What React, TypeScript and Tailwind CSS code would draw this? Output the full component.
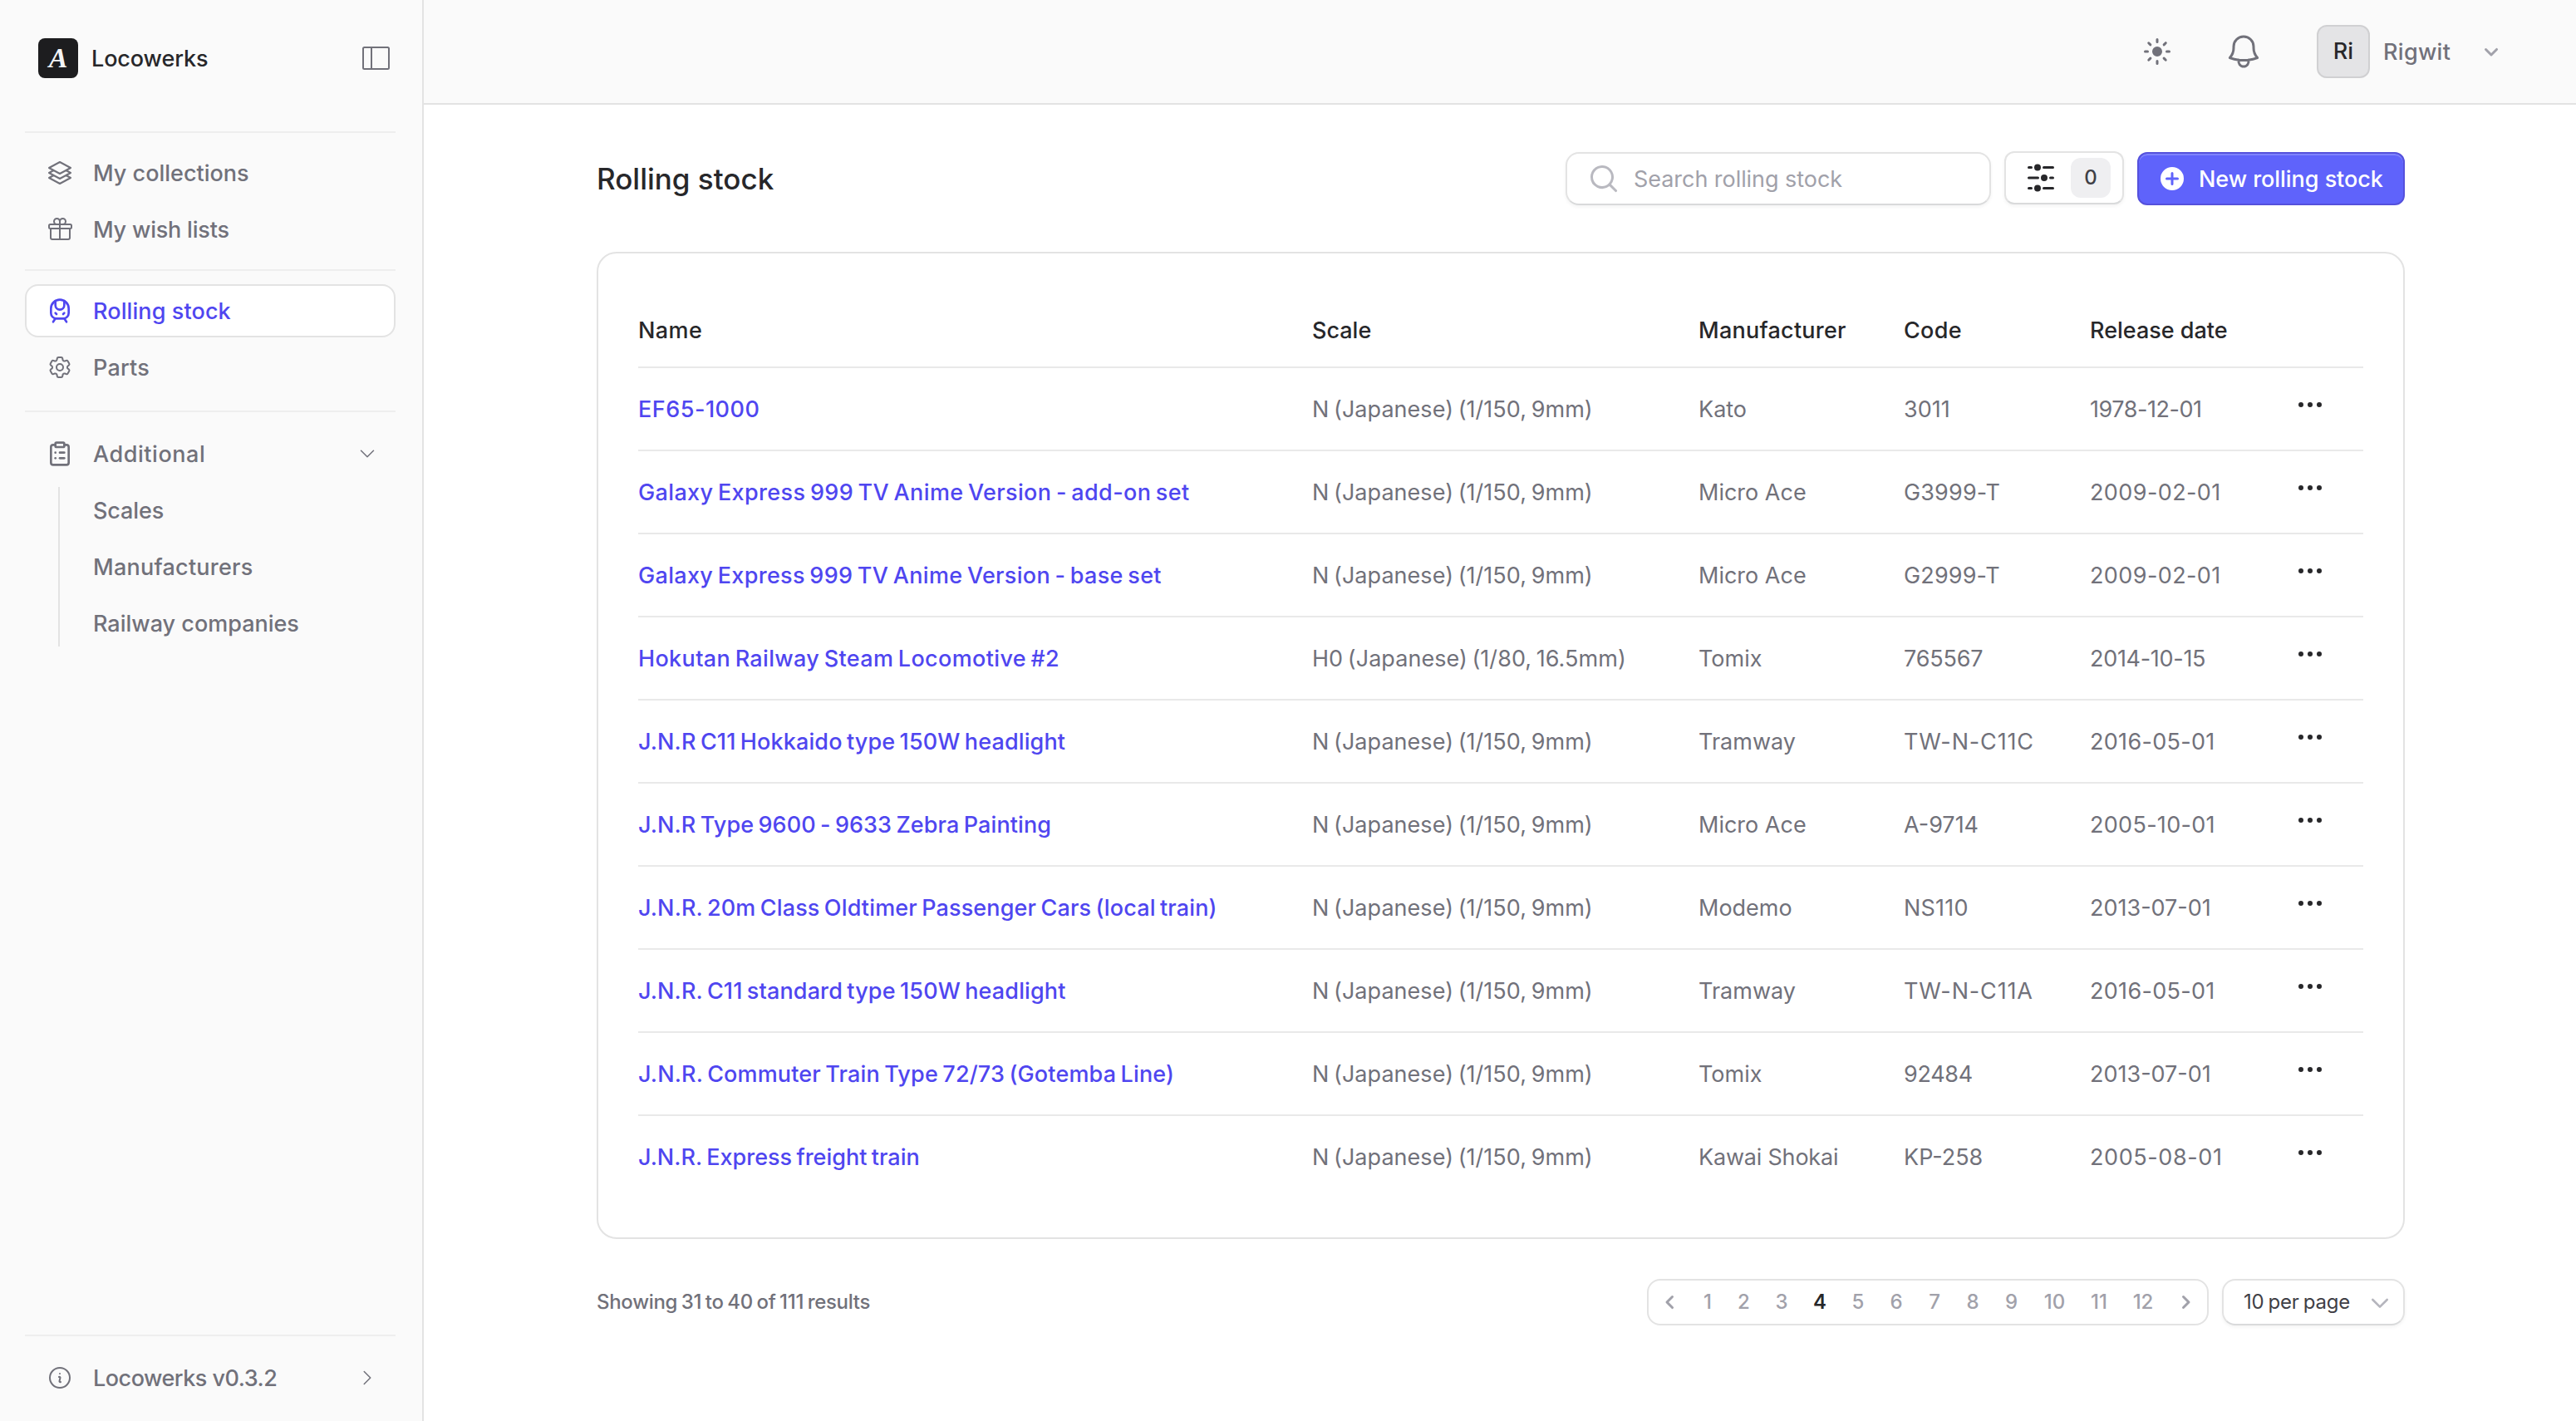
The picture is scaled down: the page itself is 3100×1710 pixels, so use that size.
import type { ReactNode } from 'react';
import clsx from 'clsx';
import { ClipboardList, TrainFront } from 'lucide-react';
import {
  HiMiniAdjustmentsHorizontal,
  HiMiniEllipsisHorizontal,
  HiMiniMagnifyingGlass,
  HiMiniSun,
  HiOutlineBell,
  HiOutlineChevronDown,
  HiOutlineChevronRight,
  HiOutlineCog6Tooth,
  HiOutlineGift,
  HiOutlineInformationCircle,
  HiOutlineSquare3Stack3D,
} from 'react-icons/hi2';

const rows = [
  { name: 'EF65-1000', nameClass: 'tracking-[0.5px]', scale: 'N (Japanese) (1/150, 9mm)', maker: 'Kato', code: '3011', date: '1978-12-01', dateClass: 'tracking-[-0.45px]' },
  { name: 'Galaxy Express 999 TV Anime Version - add-on set', nameClass: 'tracking-[0.36px]', scale: 'N (Japanese) (1/150, 9mm)', maker: 'Micro Ace', code: 'G3999-T', codeClass: 'tracking-[0.15px]', date: '2009-02-01', dateClass: 'tracking-[0.4px]' },
  { name: 'Galaxy Express 999 TV Anime Version - base set', nameClass: 'tracking-[0.32px]', scale: 'N (Japanese) (1/150, 9mm)', maker: 'Micro Ace', code: 'G2999-T', codeClass: 'tracking-[0.15px]', date: '2009-02-01', dateClass: 'tracking-[0.4px]' },
  { name: 'Hokutan Railway Steam Locomotive #2', nameClass: 'tracking-[0.35px]', scale: 'H0 (Japanese) (1/80, 16.5mm)', maker: 'Tomix', code: '765567', codeClass: 'tracking-[-0.2px]', date: '2014-10-15', dateClass: 'tracking-[-0.3px]' },
  { name: 'J.N.R C11 Hokkaido type 150W headlight', nameClass: 'tracking-[0.13px]', scale: 'N (Japanese) (1/150, 9mm)', maker: 'Tramway', code: 'TW-N-C11C', codeClass: 'tracking-[0.85px]', date: '2016-05-01', dateClass: 'tracking-[0.3px]' },
  { name: 'J.N.R Type 9600 - 9633 Zebra Painting', nameClass: 'tracking-[0.1px]', scale: 'N (Japanese) (1/150, 9mm)', maker: 'Micro Ace', code: 'A-9714', date: '2005-10-01', dateClass: 'tracking-[0.3px]' },
  { name: 'J.N.R. 20m Class Oldtimer Passenger Cars (local train)', nameClass: 'tracking-[0.14px]', scale: 'N (Japanese) (1/150, 9mm)', maker: 'Modemo', code: 'NS110', codeClass: 'tracking-[0.2px]', date: '2013-07-01' },
  { name: 'J.N.R. C11 standard type 150W headlight', nameClass: 'tracking-[0.13px]', scale: 'N (Japanese) (1/150, 9mm)', maker: 'Tramway', code: 'TW-N-C11A', codeClass: 'tracking-[0.85px]', date: '2016-05-01', dateClass: 'tracking-[0.3px]' },
  { name: 'J.N.R. Commuter Train Type 72/73 (Gotemba Line)', nameClass: 'tracking-[0.16px]', scale: 'N (Japanese) (1/150, 9mm)', maker: 'Tomix', code: '92484', codeClass: 'tracking-[-0.3px]', date: '2013-07-01' },
  { name: 'J.N.R. Express freight train', nameClass: 'tracking-[0.02px]', scale: 'N (Japanese) (1/150, 9mm)', maker: 'Kawai Shokai', makerClass: 'tracking-[-0.2px]', code: 'KP-258', date: '2005-08-01', dateClass: 'tracking-[0.6px]' },
];

const pages = [
  { n: 1, width: 'w-[42px]' },
  { n: 2, width: 'w-[45px]' },
  { n: 3, width: 'w-[46px]' },
  { n: 4, width: 'w-[46px]' },
  { n: 5, width: 'w-[46px]' },
  { n: 6, width: 'w-[46px]' },
  { n: 7, width: 'w-[46px]' },
  { n: 8, width: 'w-[46px]' },
  { n: 9, width: 'w-[47px]' },
  { n: 10, width: 'w-[57px]' },
  { n: 11, width: 'w-[50px]' },
  { n: 12, width: 'w-[56px]' },
];

function NavItem({
  icon,
  label,
  labelClass,
  active,
  trailing,
}: {
  icon?: ReactNode;
  label: string;
  labelClass?: string;
  active?: boolean;
  trailing?: ReactNode;
}) {
  return (
    <a
      className={clsx(
        'flex h-16 shrink-0 items-center rounded-2xl border-2 px-6',
        active ? 'border-[#e3e3e3] bg-white text-[#4f46f0]' : 'border-transparent text-[#71717a]',
      )}
    >
      <span className="mr-6 size-8">{icon}</span>
      <span className={clsx('flex-1 pt-0.5 text-[27px] leading-9 font-medium', labelClass)}>{label}</span>
      {trailing}
    </a>
  );
}

const subItems = [
  { label: 'Scales', tracking: 'tracking-[-0.1px]' },
  { label: 'Manufacturers', tracking: 'tracking-[0.25px]' },
  { label: 'Railway companies', tracking: 'tracking-normal' },
];

function Sidebar() {
  return (
    <aside className="flex w-[510px] shrink-0 flex-col border-r-2 border-[#e3e3e3] bg-[#fafafa] pr-8 pb-5 pl-[30px]">
      <div className="flex h-[158px] items-start pt-[46px] pr-1 pl-4">
        <div className="flex size-12 items-center justify-center rounded-lg bg-[#1d1d1f]">
          <span className="font-['Liberation_Serif'] text-[34px] leading-none font-bold text-[#f4f4f5] italic">A</span>
        </div>
        <span className="ml-4 flex-1 pt-px text-[27px] leading-[48px] font-medium tracking-[-0.1px] text-[#27272a]">Locowerks</span>
        <svg viewBox="0 0 40 40" className="mt-1 size-10 text-[#71717a]" fill="none" stroke="currentColor" strokeWidth="2">
          <rect x="5" y="7" width="31" height="26" rx="1.5" />
          <path d="M15 7v26" />
        </svg>
      </div>
      <div className="h-0.5 bg-[#eeeeee]" />
      <nav className="flex flex-col gap-1 py-4">
        <NavItem icon={<HiOutlineSquare3Stack3D className="size-8" />} label="My collections" />
        <NavItem icon={<HiOutlineGift className="size-8" />} label="My wish lists" labelClass="tracking-[-0.2px]" />
      </nav>
      <div className="h-0.5 bg-[#eeeeee]" />
      <nav className="flex flex-col gap-1 pt-4 pb-5">
        <NavItem icon={<TrainFront className="size-8" />} label="Rolling stock" labelClass="tracking-[0.1px]" active />
        <NavItem icon={<HiOutlineCog6Tooth className="size-8" />} label="Parts" labelClass="tracking-[0.2px]" />
      </nav>
      <div className="h-0.5 bg-[#eeeeee]" />
      <nav className="flex flex-col gap-2 pt-[18px]">
        <NavItem
          icon={<ClipboardList className="size-8" />}
          label="Additional"
          labelClass="tracking-[0.55px]"
          trailing={<HiOutlineChevronDown className="mr-[-4px] size-6" />}
        />
        <div className="ml-10 flex h-48 flex-col justify-center gap-1 border-l-2 border-[#e3e3e3]">
          {subItems.map((item) => (
            <a
              key={item.label}
              className={clsx('flex h-16 shrink-0 items-center pt-0.5 pl-10 text-[27px] leading-9 font-medium text-[#71717a]', item.tracking)}
            >
              {item.label}
            </a>
          ))}
        </div>
      </nav>
      <div className="flex-1" />
      <div className="mb-[18px] h-0.5 bg-[#eeeeee]" />
      <NavItem
        icon={<HiOutlineInformationCircle className="size-8" />}
        label="Locowerks v0.3.2"
        labelClass="tracking-[-0.5px]"
        trailing={<HiOutlineChevronRight className="mr-[-4px] size-6" />}
      />
    </aside>
  );
}

function TopBar() {
  return (
    <header className="flex h-[126px] shrink-0 items-center justify-end border-b-2 border-[#e3e3e3] bg-[#fafafa] pr-[86px] text-[#71717a]">
      <HiMiniSun className="size-10" />
      <HiOutlineBell className="ml-[60px] size-12" />
      <div className="ml-16 flex size-16 items-center justify-center rounded-xl border-2 border-[#d0d0d2] bg-[#e4e4e6] text-[27px] font-medium text-[#27272a]">
        Ri
      </div>
      <span className="ml-4 w-[114px] pt-0.5 text-[27px] leading-9 font-medium tracking-[0.3px]">Rigwit</span>
      <svg viewBox="0 0 16 16" className="size-8 text-[#a1a1aa]" fill="currentColor">
        <path d="M4.22 6.22a.75.75 0 0 1 1.06 0L8 8.94l2.72-2.72a.75.75 0 1 1 1.06 1.06l-3.25 3.25a.75.75 0 0 1-1.06 0L4.22 7.28a.75.75 0 0 1 0-1.06Z" />
      </svg>
    </header>
  );
}

function Toolbar() {
  return (
    <div className="flex h-16 items-center">
      <h1 className="flex-1 text-[35px] leading-none font-medium text-[#27272a]">Rolling stock</h1>
      <div className="flex h-16 w-[512px] items-center rounded-2xl border-2 border-[#e3e3e3] border-b-[#d9dadb] bg-white pl-6 shadow-[0_2px_4px_rgba(0,0,0,0.05)]">
        <HiMiniMagnifyingGlass className="size-10 text-[#b9b9c0]" />
        <span className="ml-4 pt-0.5 text-[27px] tracking-[-0.05px] text-[#a1a1aa]">Search rolling stock</span>
      </div>
      <button className="mt-[-2px] ml-4 flex h-16 w-36 items-center rounded-xl border-2 border-[#e3e3e3] border-b-[#d9dadb] bg-white pl-[22px] text-[#27272a] shadow-[0_2px_4px_rgba(0,0,0,0.05)]">
        <HiMiniAdjustmentsHorizontal className="size-10" />
        <span className="ml-4 flex size-12 items-center justify-center rounded-xl bg-[#efeff1] text-[24px] font-medium text-[#3f3f46]">
          0
        </span>
      </button>
      <button className="ml-4 flex h-16 w-[322px] items-center rounded-xl border-2 border-[#5551dc] bg-[#5f63fb] pl-6 text-white shadow-[inset_0_2px_0_#7f83fc]">
        <svg viewBox="0 0 16 16" className="size-8" fill="currentColor">
          <path d="M8 15A7 7 0 1 0 8 1a7 7 0 0 0 0 14Zm.75-10.25v2.5h2.5a.75.75 0 0 1 0 1.5h-2.5v2.5a.75.75 0 0 1-1.5 0v-2.5h-2.5a.75.75 0 0 1 0-1.5h2.5v-2.5a.75.75 0 0 1 1.5 0Z" />
        </svg>
        <span className="ml-4 pt-0.5 text-[27px] font-medium tracking-[-0.05px]">New rolling stock</span>
      </button>
    </div>
  );
}

function StockTable() {
  return (
    <div className="mt-14 rounded-3xl border-2 border-[#e3e3e3] bg-white p-12 text-[27px]">
      <div className="grid h-[90px] grid-cols-[811px_465px_247px_224px_1fr] items-center border-b-2 border-[#e9e9e9] pt-0.5 font-medium text-[#27272a]">
        <span className="tracking-[0.4px]">Name</span>
        <span>Scale</span>
        <span className="tracking-[0.25px]">Manufacturer</span>
        <span className="tracking-[0.3px]">Code</span>
        <span>Release date</span>
      </div>
      {rows.map((row) => (
        <div
          key={row.name}
          className="grid h-[100px] grid-cols-[811px_465px_247px_224px_245px_1fr] items-center border-b-2 border-[#e9e9e9] pt-0.5 text-[#71717a] last:h-[98px] last:border-b-0"
        >
          <a className={clsx('font-medium whitespace-nowrap text-[#4f46f0] [word-spacing:-2px]', row.nameClass)}>{row.name}</a>
          <span className="tracking-[0.04px] [word-spacing:-2px]">{row.scale}</span>
          <span className={row.makerClass}>{row.maker}</span>
          <span className={row.codeClass}>{row.code}</span>
          <span className={row.dateClass}>{row.date}</span>
          <HiMiniEllipsisHorizontal className="mb-3 size-10 text-[#27272a]" />
        </div>
      ))}
    </div>
  );
}

function Pagination() {
  return (
    <div className="mt-12 flex h-14 items-center text-[24px] font-medium">
      <span className="flex-1 tracking-[-0.3px] text-[#71717a] [word-spacing:-1.5px]">Showing 31 to 40 of 111 results</span>
      <div className="flex h-14 w-[676px] items-center rounded-2xl border-2 border-[#e3e3e3] bg-white pl-[10px] text-[#a1a1aa]">
        <svg viewBox="0 0 16 16" className="mr-[8px] size-8" fill="currentColor">
          <path d="M9.78 4.22a.75.75 0 0 1 0 1.06L7.06 8l2.72 2.72a.75.75 0 1 1-1.06 1.06L5.47 8.53a.75.75 0 0 1 0-1.06l3.25-3.25a.75.75 0 0 1 1.06 0Z" />
        </svg>
        {pages.map(({ n, width }) => (
          <span key={n} className={clsx('text-center', width, n === 4 && 'font-semibold text-[#27272a]')}>
            {n}
          </span>
        ))}
        <svg viewBox="0 0 16 16" className="ml-[7px] size-8" fill="currentColor">
          <path d="M6.22 4.22a.75.75 0 0 1 1.06 0l3.25 3.25a.75.75 0 0 1 0 1.06l-3.25 3.25a.75.75 0 0 1-1.06-1.06L8.94 8 6.22 5.28a.75.75 0 0 1 0-1.06Z" />
        </svg>
      </div>
      <div className="ml-4 flex h-14 w-[220px] items-center justify-between rounded-2xl border-2 border-[#e3e3e3] border-b-[#d9dadb] bg-white pr-4 pl-6 font-normal tracking-[-0.2px] text-[#3f3f46] shadow-[0_2px_4px_rgba(0,0,0,0.05)] [word-spacing:-1.5px]">
        10 per page
        <svg viewBox="0 0 24 24" className="size-6 text-[#b5b5bd]" fill="none" stroke="currentColor" strokeWidth="2.6" strokeLinecap="round" strokeLinejoin="round">
          <path d="M3.3 9l8.7 8.7L20.7 9" />
        </svg>
      </div>
    </div>
  );
}

export default function App() {
  return (
    <div className="flex h-[1710px] w-[3100px] overflow-hidden bg-white font-['Inter',sans-serif]">
      <Sidebar />
      <div className="flex flex-1 flex-col">
        <TopBar />
        <main className="ml-52 w-[2176px] pt-[57px]">
          <Toolbar />
          <StockTable />
          <Pagination />
        </main>
      </div>
    </div>
  );
}
